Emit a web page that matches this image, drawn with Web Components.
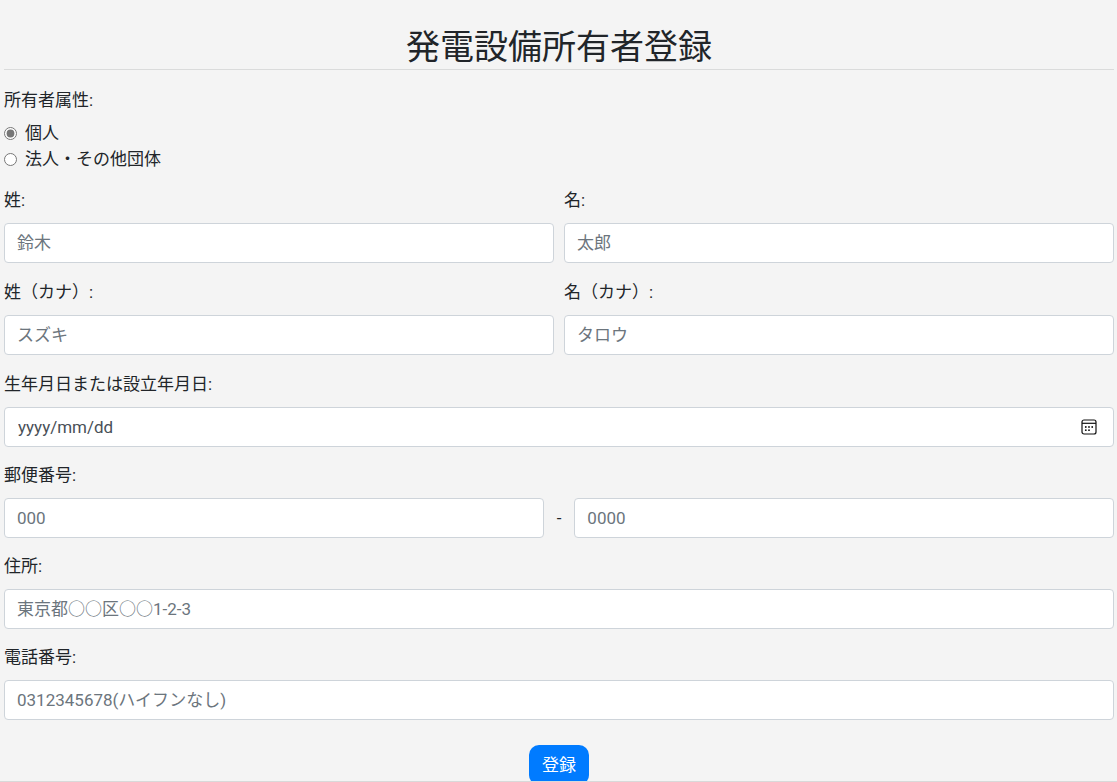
<!DOCTYPE html>
<html lang="ja">
<head>
<meta charset="utf-8">
<meta name="viewport" content="width=device-width, initial-scale=1">
<title>発電設備所有者登録</title>
<style>
  body {
    margin: 0;
    background: #f4f4f4;
    color: #212529;
    font: 17px/26px Roboto, "Noto Sans CJK JP", sans-serif;
  }
</style>
</head>
<body>
<registration-page>
  <page-title slot="title">発電設備所有者登録</page-title>
  <owner-type></owner-type>
  <field-row>
    <text-field label="姓:" placeholder="鈴木"></text-field>
    <text-field label="名:" placeholder="太郎"></text-field>
  </field-row>
  <field-row>
    <text-field label="姓（カナ）:" placeholder="スズキ"></text-field>
    <text-field label="名（カナ）:" placeholder="タロウ"></text-field>
  </field-row>
  <date-field label="生年月日または設立年月日:" placeholder="yyyy/mm/dd"></date-field>
  <postal-field></postal-field>
  <text-field label="住所:" placeholder="東京都○○区○○1-2-3"></text-field>
  <text-field label="電話番号:" placeholder="0312345678(ハイフンなし)"></text-field>
  <submit-button slot="action">登録</submit-button>
</registration-page>

<script>
const fieldStyles = `
  :host { display: block; min-width: 0; }
  * { box-sizing: border-box; }
  label { display: block; margin-bottom: 10px; }
  input {
    display: block; width: 100%; min-width: 0; height: 40px; margin: 0;
    padding: 0 12px; border: 1px solid #ced4da; border-radius: 4px;
    background: #fff; color: #495057; font: inherit;
  }
  input::placeholder { color: #6c757d; opacity: 1; }
  input:focus { outline: 3px solid #b3d7ff; border-color: #80bdff; }
`;

function define(name, render) {
  customElements.define(name, class extends HTMLElement {
    constructor() {
      super();
      this.attachShadow({ mode: 'open' });
    }
    connectedCallback() {
      this.shadowRoot.innerHTML = render(this);
    }
  });
}

define('registration-page', () => `
  <style>
    :host { display: flex; flex-direction: column; height: 100vh; }
    main { flex: 1; min-height: 0; overflow: auto; scrollbar-width: none; padding: 26px 3px 0 4px; }
    form { margin: 0; }
    .fields { display: grid; grid-template-columns: minmax(0, 1fr); gap: 15px; padding-top: 17px; }
    .action { display: flex; justify-content: center; padding: 25px 0; }
    footer { border-top: 1px solid #d9d9d9; }
  </style>
  <main>
    <slot name="title"></slot>
    <form>
      <div class="fields"><slot></slot></div>
      <div class="action"><slot name="action"></slot></div>
    </form>
  </main>
  <footer></footer>`);

define('page-title', () => `
  <style>
    :host { display: block; border-bottom: 1px solid #dadbdb; }
    h1 { margin: 0; font-size: 34px; line-height: 43px; font-weight: 400; text-align: center; }
  </style>
  <h1><slot></slot></h1>`);

define('owner-type', () => `
  <style>
    :host { display: block; }
    fieldset { margin: 0; padding: 0; border: 0; }
    legend { padding: 0; margin-bottom: 7px; }
    label { display: flex; align-items: center; gap: 8px; }
    input { width: 13px; height: 13px; margin: 0; accent-color: #767676; }
  </style>
  <fieldset>
    <legend>所有者属性:</legend>
    <label><input type="radio" name="owner" value="person" checked>個人</label>
    <label><input type="radio" name="owner" value="group">法人・その他団体</label>
  </fieldset>`);

define('field-row', () => `
  <style>
    :host { display: grid; grid-template-columns: repeat(2, minmax(0, 1fr)); gap: 10px; padding-bottom: 1px; }
  </style>
  <slot></slot>`);

define('text-field', el => `
  <style>${fieldStyles}</style>
  <label for="control">${el.getAttribute('label')}</label>
  <input id="control" type="text" placeholder="${el.getAttribute('placeholder')}">`);

define('date-field', el => `
  <style>${fieldStyles}
    .box { display: grid; align-items: center; }
    .box > * { grid-area: 1 / 1; }
    input { padding: 0 44px 0 13px; }
    input::placeholder { color: #495057; }
    button {
      justify-self: end; display: flex; margin-right: 17px; padding: 0;
      border: 0; background: none; color: #111; cursor: pointer;
    }
  </style>
  <label for="control">${el.getAttribute('label')}</label>
  <div class="box">
    <input id="control" type="text" inputmode="numeric" placeholder="${el.getAttribute('placeholder')}">
    <button type="button" aria-label="カレンダーを開く">
      <svg width="16" height="16" viewBox="0 0 16 16" fill="none" stroke="currentColor">
        <rect x="1" y="1" width="14" height="14" rx="2" stroke-width="1.2"/>
        <path d="M1 4.3h14" stroke-width="1.2"/>
        <g fill="currentColor" stroke="none">
          <circle cx="4.8" cy="8" r=".9"/><circle cx="8" cy="8" r=".9"/><circle cx="11.2" cy="8" r=".9"/>
          <circle cx="4.8" cy="11.2" r=".9"/><circle cx="8" cy="11.2" r=".9"/>
        </g>
      </svg>
    </button>
  </div>`);

define('postal-field', () => `
  <style>${fieldStyles}
    .parts { display: flex; align-items: center; gap: 13px; }
    input { flex: 1; }
  </style>
  <label for="first">郵便番号:</label>
  <div class="parts">
    <input id="first" type="text" inputmode="numeric" placeholder="000">
    <span>-</span>
    <input type="text" inputmode="numeric" aria-label="郵便番号（下4桁）" placeholder="0000">
  </div>`);

define('submit-button', () => `
  <style>
    :host { display: block; }
    button {
      display: block; height: 40px; padding: 0 13px; border: 0; border-radius: 10px;
      background: #007bff; color: #fff; font: inherit; cursor: pointer;
    }
  </style>
  <button type="submit"><slot></slot></button>`);
</script>
</body>
</html>
